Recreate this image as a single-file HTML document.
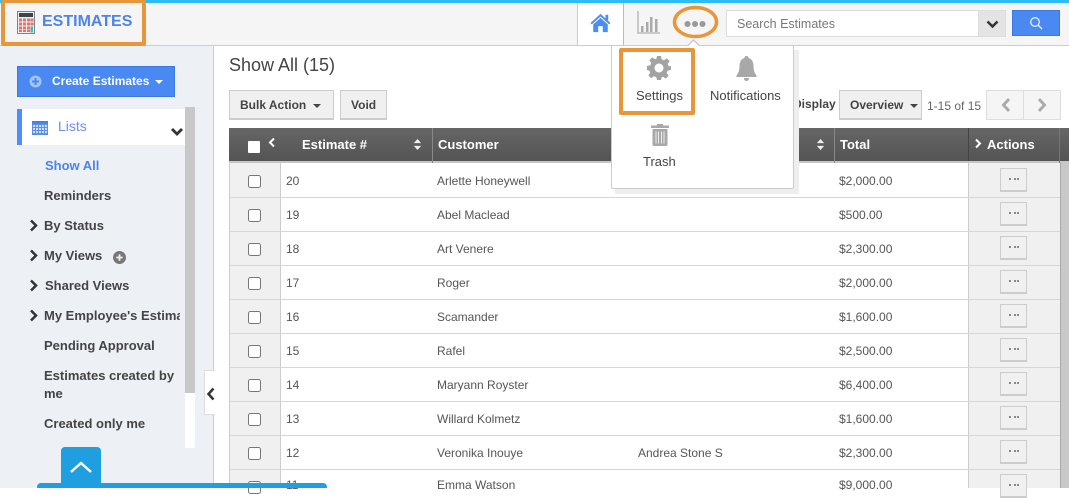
<!DOCTYPE html>
<html><head><meta charset="utf-8">
<style>
html,body{margin:0;padding:0;width:1069px;height:488px;overflow:hidden;background:#fff;font-family:"Liberation Sans",sans-serif;color:#444}
*{box-sizing:border-box}
.a{position:absolute}
.t{position:absolute;white-space:nowrap;line-height:16px}
.nav{font-size:13px;font-weight:bold;color:#444;left:44px}
.cell{font-size:12px;color:#555}
.hd{font-size:13px;font-weight:bold;color:#fff;top:137px}
.btn{position:absolute;background:#f0f0f0;border:1px solid #ccc;border-bottom:2px solid #ccc;font-size:12px;font-weight:bold;color:#444}
.cb{position:absolute;left:248px;width:13px;height:13px;border:1px solid #767676;border-radius:2.5px;background:#fff}
.act{position:absolute;left:1000px;width:27px;height:24px;background:#f0f0f0;border:1px solid #ccc;border-bottom:2px solid #ccc}
.act:after{content:"";position:absolute;left:8px;top:9px;width:2px;height:2px;background:#888;box-shadow:5px 0 #888,8px 0 #888}
.rl{position:absolute;left:229px;width:831px;height:1px;background:#d6d6d6}
</style></head><body>

<!-- top bar -->
<div class="a" style="left:0;top:0;width:1069px;height:46px;background:#f5f5f5;border-bottom:1px solid #ccc"></div>
<div class="a" style="left:0;top:0;width:1069px;height:3px;background:#2dbdf6"></div>
<div class="a" style="left:1px;top:0;width:145px;height:46px;border:4px solid #e8963a;border-top-width:3px;border-radius:2px"></div>
<svg class="a" style="left:17px;top:11px" width="18" height="23" viewBox="0 0 18 23"><rect x=".5" y=".5" width="17" height="22" fill="#eee" stroke="#78868c"/><rect x="2" y="2" width="14" height="4" fill="#37474f"/><g fill="#e8716c"><rect x="2" y="7.500" width="3" height="3"/><rect x="6" y="7.500" width="3" height="3"/><rect x="10" y="7.500" width="3" height="3"/><rect x="13.500" y="7.500" width="3" height="3"/><rect x="2" y="11.500" width="3" height="3"/><rect x="6" y="11.500" width="3" height="3"/><rect x="10" y="11.500" width="3" height="3"/><rect x="13.500" y="11.500" width="3" height="3"/><rect x="2" y="15.500" width="3" height="3"/><rect x="6" y="15.500" width="3" height="3"/><rect x="10" y="15.500" width="3" height="3"/><rect x="2" y="19" width="3" height="2"/><rect x="6" y="19" width="3" height="2"/><rect x="10" y="19" width="3" height="2"/></g><rect x="13.500" y="15.500" width="2.500" height="6" fill="#4db6ac"/></svg>
<div class="t" style="left:42px;top:14px;font-size:16px;font-weight:bold;color:#4c84ea;letter-spacing:0">ESTIMATES</div>

<div class="a" style="left:577px;top:3px;width:47px;height:42px;background:#fff;border-left:1px solid #ccc;border-right:1px solid #bbb"></div>
<svg class="a" style="left:590px;top:13px" width="21" height="20" viewBox="0 0 23 22"><path d="M0.500 11 L11.500 1 L22.500 11 L21 12.500 L11.500 3.800 L2 12.500Z" fill="#4c8df5"/><rect x="17" y="2" width="3" height="6" fill="#4c8df5"/><path d="M3.500 12.500 L11.500 5.300 L19.500 12.500 V21 H14 V14.500 H9 V21 H3.500Z" fill="#4c8df5"/></svg>
<svg class="a" style="left:637px;top:11px" width="23" height="23" viewBox="0 0 23 23"><path d="M1 0V22H23" fill="none" stroke="#bbb" stroke-width="1.500"/><g fill="#aaa"><rect x="4" y="15" width="2.500" height="6"/><rect x="9" y="11" width="2.500" height="10"/><rect x="13" y="6" width="2.500" height="15"/><rect x="18" y="8" width="2.500" height="13"/></g></svg>
<svg class="a" style="left:672px;top:4px" width="48" height="36" viewBox="0 0 48 36"><ellipse cx="23.500" cy="18" rx="21" ry="14.500" fill="none" stroke="#e8963a" stroke-width="3.500"/><g fill="#999"><circle cx="15.500" cy="20" r="3"/><circle cx="23" cy="20" r="3"/><circle cx="30.500" cy="20" r="3"/></g></svg>

<div class="a" style="left:726px;top:10px;width:280px;height:27px;background:#fff;border:1px solid #ddd"></div>
<div class="t" style="left:737px;top:16px;font-size:12.500px;color:#777">Search Estimates</div>
<div class="a" style="left:978px;top:10px;width:28px;height:27px;background:#e4e4e4;border:1px solid #ddd"></div>
<svg class="a" style="left:986px;top:20px" width="13" height="9" viewBox="0 0 13 9"><path d="M1.500 1.500L6.500 6.500L11.500 1.500" fill="none" stroke="#333" stroke-width="2.500"/></svg>
<div class="a" style="left:1012px;top:10px;width:48px;height:26px;background:#4a88f2;border:1px solid #3b78e0"></div>
<svg class="a" style="left:1029px;top:16px" width="14" height="14" viewBox="0 0 14 14"><circle cx="6" cy="6" r="4.300" fill="none" stroke="#e8f0ff" stroke-width="1.300"/><path d="M9 9L13 13" stroke="#e8f0ff" stroke-width="1.500"/></svg>

<!-- sidebar -->
<div class="a" style="left:0;top:46px;width:214px;height:442px;background:#edf0f5;border-right:1px solid #ccc"></div>
<div class="a" style="left:17px;top:66px;width:158px;height:31px;background:#4a88f2;border:1px solid #3b78e0"></div>
<svg class="a" style="left:29px;top:75px" width="13" height="13" viewBox="0 0 13 13"><circle cx="6.500" cy="6.500" r="6" fill="#a5c3f7"/><path d="M6.500 3V10M3 6.500H10" stroke="#4a88f2" stroke-width="2"/></svg>
<div class="t" style="left:52px;top:73px;font-size:12px;font-weight:bold;color:#fff">Create Estimates</div>
<div class="a" style="left:155px;top:80px;border:4px solid transparent;border-top:4px solid #fff"></div>

<div class="a" style="left:17px;top:109px;width:168px;height:36px;background:#fff;border-left:5px solid #4d8ef8"></div>
<svg class="a" style="left:32px;top:121px" width="16" height="14" viewBox="0 0 16 14"><rect width="16" height="14" fill="#5b8fe8"/><rect y="0" width="16" height="2.500" fill="#4a80df"/><g fill="#cfe0fb"><rect x="1" y="4" width="2" height="2"/><rect x="4" y="4" width="2" height="2"/><rect x="7" y="4" width="2" height="2"/><rect x="10" y="4" width="2" height="2"/><rect x="13" y="4" width="2" height="2"/><rect x="1" y="7" width="2" height="2"/><rect x="4" y="7" width="2" height="2"/><rect x="7" y="7" width="2" height="2"/><rect x="10" y="7" width="2" height="2"/><rect x="13" y="7" width="2" height="2"/><rect x="1" y="10" width="2" height="2"/><rect x="4" y="10" width="2" height="2"/><rect x="7" y="10" width="2" height="2"/><rect x="10" y="10" width="2" height="2"/><rect x="13" y="10" width="2" height="2"/></g></svg>
<div class="t" style="left:58px;top:118px;font-size:14px;color:#6f8cf0">Lists</div>
<svg class="a" style="left:170px;top:127px" width="14" height="10" viewBox="0 0 14 10"><path d="M2 2L7 7L12 2" fill="none" stroke="#333" stroke-width="2.800"/></svg>
<div class="a" style="left:185px;top:107px;width:10px;height:341px;background:#fff"></div>
<div class="a" style="left:185px;top:107px;width:10px;height:286px;background:#c8c8c8"></div>

<div class="t nav" style="left:45px;top:158px;color:#4c84ea">Show All</div>
<div class="t nav" style="top:188px">Reminders</div>
<div class="t nav" style="top:218px">By Status</div>
<div class="t nav" style="top:248px">My Views</div>
<div class="t nav" style="left:45px;top:278px">Shared Views</div>
<div class="a" style="left:44px;top:308px;width:136px;height:18px;overflow:hidden"><div class="t nav" style="left:0;top:0">My Employee's Estimates</div></div>
<div class="t nav" style="top:338px">Pending Approval</div>
<div class="t nav" style="top:368px">Estimates created by</div>
<div class="t nav" style="top:386px">me</div>
<div class="t nav" style="top:416px">Created only me</div>
<svg class="a" style="left:29px;top:219px" width="10" height="13" viewBox="0 0 10 13"><path d="M2 1.500L7 6.500L2 11.500" fill="none" stroke="#333" stroke-width="2.500"/></svg>
<svg class="a" style="left:29px;top:249px" width="10" height="13" viewBox="0 0 10 13"><path d="M2 1.500L7 6.500L2 11.500" fill="none" stroke="#333" stroke-width="2.500"/></svg>
<svg class="a" style="left:29px;top:279px" width="10" height="13" viewBox="0 0 10 13"><path d="M2 1.500L7 6.500L2 11.500" fill="none" stroke="#333" stroke-width="2.500"/></svg>
<svg class="a" style="left:29px;top:309px" width="10" height="13" viewBox="0 0 10 13"><path d="M2 1.500L7 6.500L2 11.500" fill="none" stroke="#333" stroke-width="2.500"/></svg>
<svg class="a" style="left:113px;top:251px" width="13" height="13" viewBox="0 0 14 14"><circle cx="7" cy="7" r="7" fill="#777"/><path d="M7 3.500V10.500M3.500 7H10.500" stroke="#eee" stroke-width="2"/></svg>

<div class="a" style="left:204px;top:370px;width:11px;height:45px;background:#fff;border:1px solid #ddd;border-right:0"></div>
<svg class="a" style="left:206px;top:387px" width="10" height="14" viewBox="0 0 10 14"><path d="M7.500 1.500L2.500 7L7.500 12.500" fill="none" stroke="#333" stroke-width="2.500"/></svg>

<!-- content header -->
<div class="t" style="left:229px;top:55px;font-size:18px;line-height:20px;color:#444">Show All (15)</div>
<div class="btn" style="left:229px;top:90px;width:105px;height:30px"></div>
<div class="t" style="left:240px;top:97px;font-size:12px;font-weight:bold">Bulk Action</div>
<div class="a" style="left:313px;top:104px;border:4px solid transparent;border-top:4px solid #444"></div>
<div class="btn" style="left:340px;top:90px;width:47px;height:30px"></div>
<div class="t" style="left:351px;top:97px;font-size:12px;font-weight:bold">Void</div>

<div class="t" style="left:793px;top:96px;font-size:12px;font-weight:bold;color:#444">Display</div>
<div class="btn" style="left:839px;top:90px;width:83px;height:30px"></div>
<div class="t" style="left:850px;top:97px;font-size:12px;font-weight:bold">Overview</div>
<div class="a" style="left:910px;top:104px;border:4px solid transparent;border-top:4px solid #444"></div>
<div class="t" style="left:927px;top:98px;font-size:12px;color:#666">1-15 of 15</div>
<div class="a" style="left:986px;top:90px;width:38px;height:30px;background:#f5f5f5;border:1px solid #ddd"></div>
<div class="a" style="left:1023px;top:90px;width:38px;height:30px;background:#f5f5f5;border:1px solid #ddd"></div>
<svg class="a" style="left:1000px;top:97px" width="12" height="16" viewBox="0 0 12 16"><path d="M9 2L3.500 8L9 14" fill="none" stroke="#aaa" stroke-width="2.800"/></svg>
<svg class="a" style="left:1036px;top:97px" width="12" height="16" viewBox="0 0 12 16"><path d="M3 2L8.500 8L3 14" fill="none" stroke="#aaa" stroke-width="2.800"/></svg>

<!-- table -->
<div class="a" style="left:229px;top:128px;width:840px;height:33px;background:linear-gradient(#666,#545454)"></div>
<div class="a" style="left:229px;top:161px;width:840px;height:2px;background:#c6c6c6"></div>
<div class="a" style="left:229px;top:163px;width:51px;height:325px;background:#f0f0f0;border-left:1px solid #ccc"></div>
<div class="a" style="left:280px;top:163px;width:1px;height:325px;background:#ccc"></div>
<div class="a" style="left:968px;top:128px;width:92px;height:360px;background:#f0f0f0;border-left:1px solid #ccc"></div>
<div class="a" style="left:968px;top:128px;width:92px;height:33px;background:linear-gradient(#666,#545454);border-left:1px solid #444"></div>
<div class="a" style="left:968px;top:161px;width:92px;height:2px;background:#c6c6c6"></div>
<div class="a" style="left:1060px;top:163px;width:9px;height:325px;background:#c8c8c8;border-left:1px solid #aaa"></div>
<div class="a" style="left:432px;top:128px;width:1px;height:35px;background:#888"></div>
<div class="a" style="left:834px;top:128px;width:1px;height:35px;background:#888"></div>
<div class="a" style="left:1059px;top:128px;width:1px;height:35px;background:#777"></div>

<div class="a" style="left:248px;top:141px;width:12px;height:12px;background:#fff;border-radius:1px"></div>
<svg class="a" style="left:268px;top:137px" width="8" height="12" viewBox="0 0 8 12"><path d="M6 1.500L2 5.500L6 9.500" fill="none" stroke="#fff" stroke-width="2"/></svg>
<div class="t hd" style="left:302px">Estimate #</div>
<svg class="a" style="left:413px;top:139px" width="9" height="11" viewBox="0 0 9 12"><path d="M4.500 0L8.500 4.500H.5ZM4.500 12L.5 7.500H8.500Z" fill="#eee"/></svg>
<div class="t hd" style="left:438px">Customer</div>
<svg class="a" style="left:816px;top:139px" width="9" height="11" viewBox="0 0 9 12"><path d="M4.500 0L8.500 4.500H.5ZM4.500 12L.5 7.500H8.500Z" fill="#eee"/></svg>
<div class="t hd" style="left:840px">Total</div>
<svg class="a" style="left:974px;top:138px" width="8" height="12" viewBox="0 0 8 12"><path d="M2 1.500L6 5.500L2 9.500" fill="none" stroke="#fff" stroke-width="2"/></svg>
<div class="t hd" style="left:987px">Actions</div>

<div class="rl" style="top:197px"></div><div class="rl" style="top:231px"></div><div class="rl" style="top:265px"></div><div class="rl" style="top:299px"></div><div class="rl" style="top:333px"></div><div class="rl" style="top:367px"></div><div class="rl" style="top:401px"></div><div class="rl" style="top:435px"></div><div class="rl" style="top:469px"></div>

<div class="cb" style="top:175px"></div><div class="cb" style="top:209px"></div><div class="cb" style="top:243px"></div><div class="cb" style="top:277px"></div><div class="cb" style="top:311px"></div><div class="cb" style="top:345px"></div><div class="cb" style="top:379px"></div><div class="cb" style="top:413px"></div><div class="cb" style="top:447px"></div><div class="cb" style="top:481px"></div>

<div class="act" style="top:168px"></div><div class="act" style="top:202px"></div><div class="act" style="top:236px"></div><div class="act" style="top:270px"></div><div class="act" style="top:304px"></div><div class="act" style="top:338px"></div><div class="act" style="top:372px"></div><div class="act" style="top:406px"></div><div class="act" style="top:440px"></div><div class="act" style="top:474px"></div>

<div class="t cell" style="left:286px;top:173px">20</div><div class="t cell" style="left:437px;top:173px">Arlette Honeywell</div><div class="t cell" style="left:839px;top:173px">$2,000.00</div>
<div class="t cell" style="left:286px;top:207px">19</div><div class="t cell" style="left:437px;top:207px">Abel Maclead</div><div class="t cell" style="left:839px;top:207px">$500.00</div>
<div class="t cell" style="left:286px;top:241px">18</div><div class="t cell" style="left:437px;top:241px">Art Venere</div><div class="t cell" style="left:839px;top:241px">$2,300.00</div>
<div class="t cell" style="left:286px;top:275px">17</div><div class="t cell" style="left:437px;top:275px">Roger</div><div class="t cell" style="left:839px;top:275px">$2,000.00</div>
<div class="t cell" style="left:286px;top:309px">16</div><div class="t cell" style="left:437px;top:309px">Scamander</div><div class="t cell" style="left:839px;top:309px">$1,600.00</div>
<div class="t cell" style="left:286px;top:343px">15</div><div class="t cell" style="left:437px;top:343px">Rafel</div><div class="t cell" style="left:839px;top:343px">$2,500.00</div>
<div class="t cell" style="left:286px;top:377px">14</div><div class="t cell" style="left:437px;top:377px">Maryann Royster</div><div class="t cell" style="left:839px;top:377px">$6,400.00</div>
<div class="t cell" style="left:286px;top:411px">13</div><div class="t cell" style="left:437px;top:411px">Willard Kolmetz</div><div class="t cell" style="left:839px;top:411px">$1,600.00</div>
<div class="t cell" style="left:286px;top:445px">12</div><div class="t cell" style="left:437px;top:445px">Veronika Inouye</div><div class="t cell" style="left:638px;top:445px">Andrea Stone S</div><div class="t cell" style="left:839px;top:445px">$2,300.00</div>
<div class="t cell" style="left:286px;top:477px">11</div><div class="t cell" style="left:437px;top:477px">Emma Watson</div><div class="t cell" style="left:839px;top:477px">$9,000.00</div>

<!-- bottom floating tab -->
<div class="a" style="left:61px;top:447px;width:40px;height:41px;background:#1f9ee0;border-radius:4px 4px 0 0"></div>
<svg class="a" style="left:69px;top:460px" width="24" height="14" viewBox="0 0 24 14"><path d="M2 12L12 3L22 12" fill="none" stroke="#fff" stroke-width="2.500"/></svg>
<div class="a" style="left:37px;top:483px;width:290px;height:5px;background:#1f9ee0;border-radius:4px 4px 0 0"></div>

<!-- popup -->
<div class="a" style="left:615px;top:50px;width:184px;height:144px;background:#eee"></div>
<div class="a" style="left:611px;top:45px;width:183px;height:144px;background:#fff;border:1px solid #ccc;border-radius:2px"></div>
<div class="a" style="left:689px;top:41px;width:9px;height:9px;background:#fff;border-left:1px solid #bbb;border-top:1px solid #bbb;transform:rotate(45deg)"></div>
<div class="a" style="left:619px;top:48px;width:76px;height:67px;border:4px solid #e8963a;border-radius:2px"></div>
<svg class="a" style="left:647px;top:56px" width="24" height="24" viewBox="0 0 24 24"><path fill="#a3a3a3" fill-rule="evenodd" d="M10 0H14L14.600 3.300L17 4.300L19.800 2.400L22.600 5.200L20.700 8L21.700 10.400L24 10V14L20.700 14.600L19.700 17L21.600 19.800L18.800 22.600L16 20.700L14.600 21.300L14 24H10L9.400 21.300L7 20.300L4.200 22.200L1.400 19.400L3.300 16.600L2.300 14.600L0 14V10L3.300 9.400L4.300 7L2.400 4.200L5.200 1.400L8 3.300L9.400 2.700ZM12 7.500A4.500 4.500 0 1 0 12 16.500A4.500 4.500 0 1 0 12 7.500Z"/></svg>
<div class="t" style="left:636px;top:88px;font-size:13px;color:#444">Settings</div>
<svg class="a" style="left:736px;top:56px" width="21" height="25" viewBox="0 0 21 25"><path fill="#a8a8a8" d="M10.500 0C12 0 12.500 1 12.500 2C16 3 17.500 6 17.500 10C17.500 14 18.500 17 20.500 19.500V21H.5V19.500C2.500 17 3.500 14 3.500 10C3.500 6 5 3 8.500 2C8.500 1 9 0 10.500 0Z"/><path fill="#a8a8a8" d="M8 22H13C13 24 12 25 10.500 25C9 25 8 24 8 22Z"/></svg>
<div class="t" style="left:710px;top:88px;font-size:13px;color:#444">Notifications</div>
<svg class="a" style="left:651px;top:124px" width="18" height="22" viewBox="0 0 18 22"><path fill="#a8a8a8" d="M6 0H12V1.500H18V4H0V1.500H6Z"/><path fill="#a8a8a8" d="M1.500 5H16.500V20.500C16.500 21.500 16 22 15 22H3C2 22 1.500 21.500 1.500 20.500Z"/><g fill="#eee"><rect x="4.500" y="7.500" width="1" height="12"/><rect x="7" y="7.500" width="1" height="12"/><rect x="10" y="7.500" width="1" height="12"/><rect x="12.500" y="7.500" width="1" height="12"/></g></svg>
<div class="t" style="left:643px;top:154px;font-size:13px;color:#444">Trash</div>

</body></html>
